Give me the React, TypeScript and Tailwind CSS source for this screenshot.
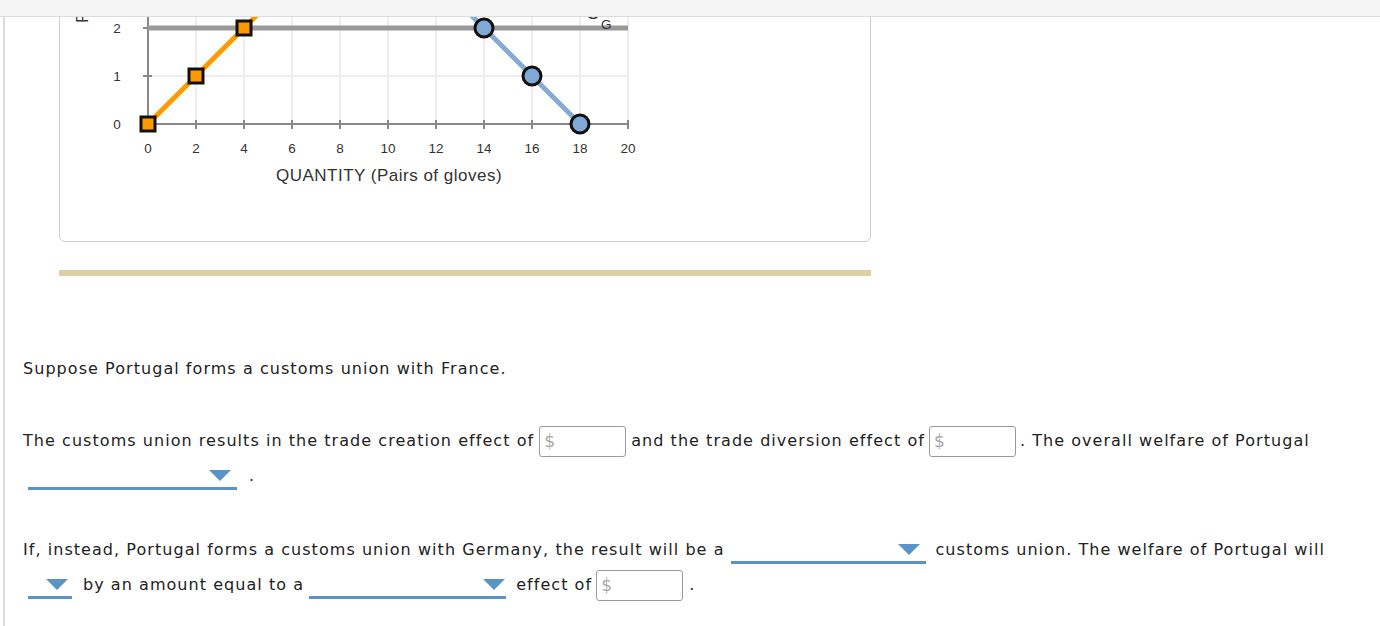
import React from "react";

const F = { fontFamily: '"DejaVu Sans", Verdana, Tahoma, sans-serif' };

function Dollar({ cls }: { cls: string }) {
  return (
    <span
      className={
        "inline-flex items-center align-middle w-[87px] h-[31px] border border-[#9a9a9a] rounded-[3px] px-[4px] text-[#a8a8a8] text-[17px] tracking-normal " +
        cls
      }
    >
      $
    </span>
  );
}

function Drop({ w, pr, cls }: { w: number; pr: number; cls: string }) {
  return (
    <span
      className={"inline-flex items-end justify-end align-middle h-[27px] border-b-[3px] border-[#5a93c6] pb-[6px] " + cls}
      style={{ width: w, paddingRight: pr }}
    >
      <svg width="22" height="11" viewBox="0 0 22 11">
        <polygon points="0,0 22,0 11,11" fill="#5a93c6" />
      </svg>
    </span>
  );
}

function Chart() {
  const xs = [0, 2, 4, 6, 8, 10, 12, 14, 16, 18, 20];
  const px = (q: number) => 148 + q * 24;
  const py = (p: number) => 124 - p * 48;
  return (
    <svg width="810" height="340" viewBox="60 -99 810 340" style={{ fontFamily: '"Liberation Sans", Arial, sans-serif' }}>
      {xs.map((q) => (
        <line key={"gv" + q} x1={px(q)} x2={px(q)} y1={py(4)} y2={py(0)} stroke="#eeeeee" strokeWidth="2" />
      ))}
      {[1, 2, 3, 4].map((p) => (
        <line key={"gh" + p} x1={px(0)} x2={px(20)} y1={py(p)} y2={py(p)} stroke="#eeeeee" strokeWidth="2" />
      ))}
      <line x1={px(0)} x2={px(0)} y1={py(4)} y2={py(0)} stroke="#888" strokeWidth="2" />
      <line x1={px(0)} x2={px(20)} y1={py(0)} y2={py(0)} stroke="#888" strokeWidth="2" />
      {xs.map((q) => (
        <line key={"tx" + q} x1={px(q)} x2={px(q)} y1={120} y2={129} stroke="#888" strokeWidth="2" />
      ))}
      {[0, 1, 2, 3, 4].map((p) => (
        <line key={"ty" + p} x1={143} x2={152} y1={py(p)} y2={py(p)} stroke="#888" strokeWidth="2" />
      ))}
      {xs.map((q) => (
        <text key={"lx" + q} x={px(q)} y={153} fontSize="13.5" fill="#333" textAnchor="middle">
          {q}
        </text>
      ))}
      {[0, 1, 2, 3].map((p) => (
        <text key={"ly" + p} x={117} y={py(p) + 5} fontSize="13.5" fill="#333" textAnchor="middle">
          {p}
        </text>
      ))}
      <text x={389} y={181} fontSize="17" letterSpacing="0.5" fill="#333" textAnchor="middle">
        QUANTITY (Pairs of gloves)
      </text>
      <text x={0} y={0} fontSize="17" fill="#333" transform="translate(88 23) rotate(-90)">
        PRICE (Dollars per pair)
      </text>
      <line x1={px(0)} x2={px(20)} y1={py(2)} y2={py(2)} stroke="#999" strokeWidth="5" />
      <text x={587} y={19} fontSize="18" fill="#333">S</text>
      <text x={601} y={29} fontSize="13.5" fill="#333">G</text>
      <line x1={px(0)} y1={py(0)} x2={px(0) + 230} y2={py(0) - 230} stroke="#ff9900" strokeWidth="5" />
      <line x1={px(18)} y1={py(0)} x2={px(18) - 230} y2={py(0) - 230} stroke="#84acd6" strokeWidth="5" />
      {[0, 2, 4].map((q) => (
        <rect key={"s" + q} x={px(q) - 7} y={py(q / 2) - 7} width="14" height="14" fill="#ff9900" stroke="#111" strokeWidth="3" />
      ))}
      {[14, 16, 18].map((q) => (
        <circle key={"c" + q} cx={px(q)} cy={py((18 - q) / 2)} r="9" fill="#80aad5" stroke="#111" strokeWidth="3" />
      ))}
    </svg>
  );
}

export default function App() {
  return (
    <div className="relative w-[1380px] h-[626px] overflow-hidden bg-white text-[#222]" style={F}>
      <div className="absolute top-0 left-0 right-0 h-[17px] bg-[#f5f5f5] border-b border-[#dcdcdc] z-10" />
      <div className="flex h-full">
        <div className="w-[3px] shrink-0" />
        <div className="w-[2px] shrink-0 bg-[#dcdcdc]" />
        <div className="flex-1">
          <div className="ml-[54px] mt-[-100px] w-[812px] h-[342px] border border-[#cfcfcf] rounded-[6px] overflow-hidden">
            <Chart />
          </div>
          <div className="ml-[54px] mt-[28px] w-[812px] h-[6px] bg-[#dcd1a4]" />
          <div className="pl-[18px] w-[1345px] text-[16px] tracking-[1.05px]">
            <p className="mt-[83px] leading-[20px]">Suppose Portugal forms a customs union with France.</p>
            <p className="mt-[44px] leading-[35px]">
              The customs union results in the trade creation effect of
              <Dollar cls="ml-[5px] mr-[5px]" />
              and the trade diversion effect of
              <Dollar cls="ml-[4px] mr-[4px]" />
              . The overall welfare of Portugal <Drop w={209} pr={6} cls="ml-[5px] mr-[12px]" />
              .
            </p>
            <p className="mt-[39px] leading-[35px]">
              If, instead, Portugal forms a customs union with Germany, the result will be a
              <Drop w={195} pr={6} cls="ml-[6px] mr-[10px]" />
              customs union. The welfare of Portugal will <Drop w={44} pr={4} cls="ml-[5px] mr-[11px]" />
              by an amount equal to a
              <Drop w={197} pr={1} cls="ml-[5px] mr-[10px]" />
              effect of
              <Dollar cls="ml-[4px] mr-[6px]" />
              .
            </p>
          </div>
        </div>
      </div>
    </div>
  );
}
